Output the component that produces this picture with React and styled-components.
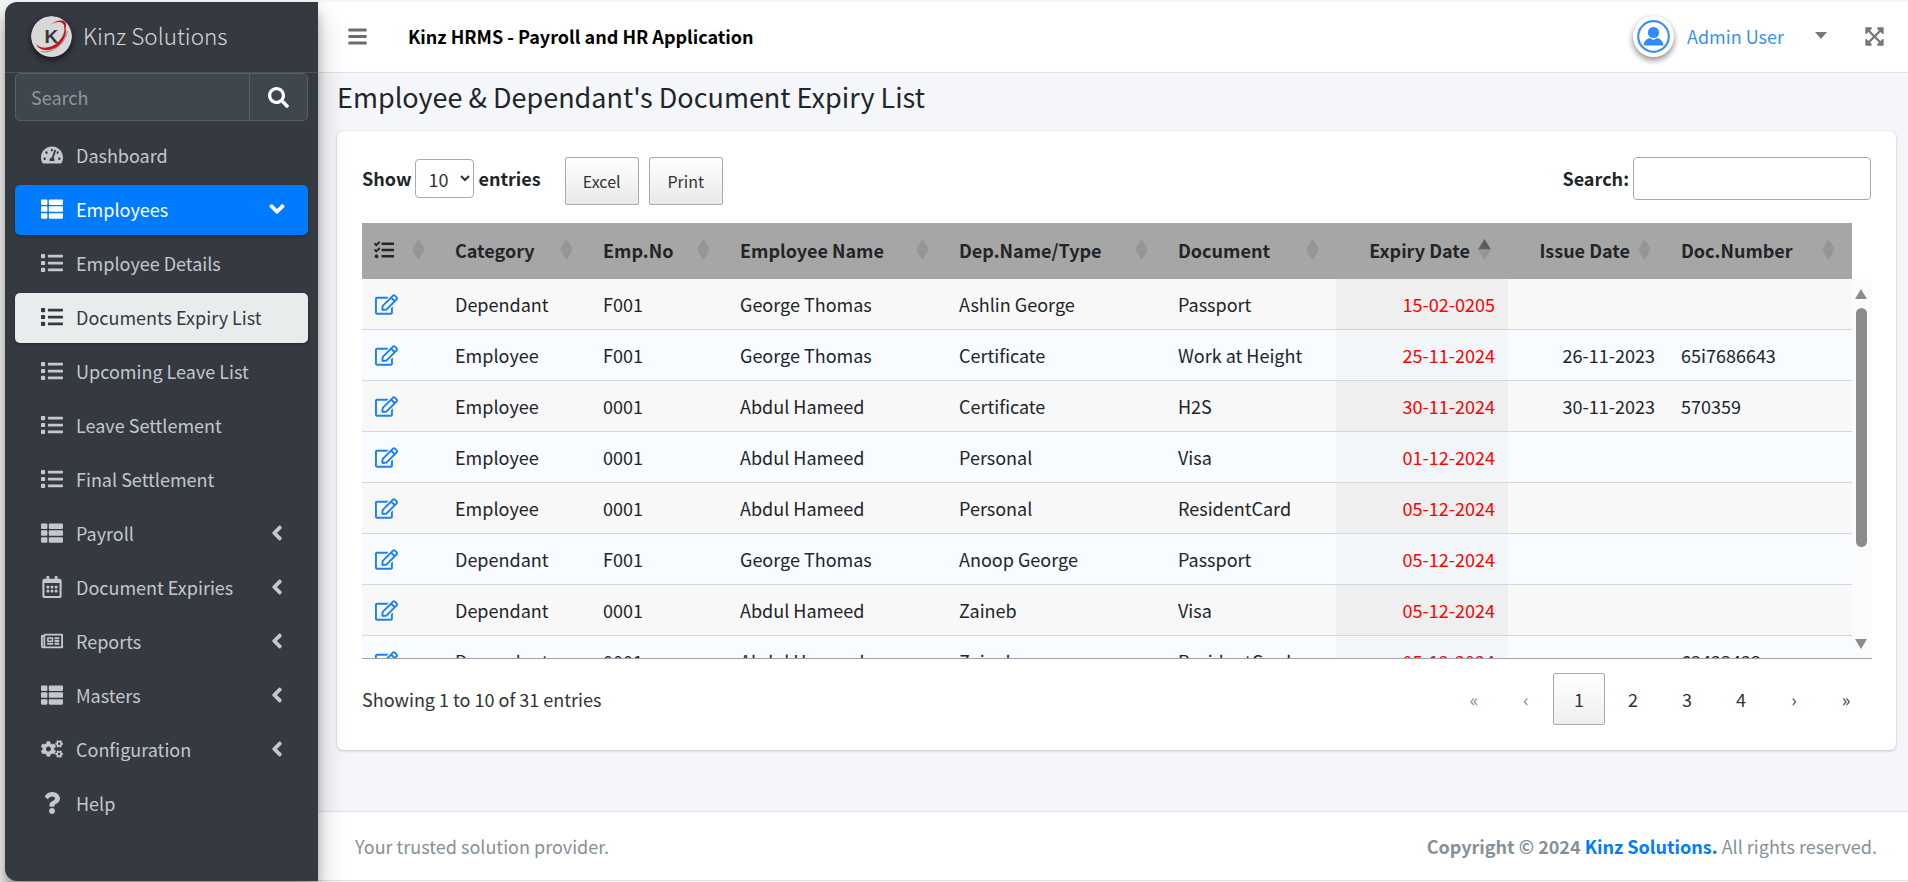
import React from "react";
import styled, { createGlobalStyle } from "styled-components";
import {
  FaTachometerAlt,
  FaThList,
  FaList,
  FaRegCalendarAlt,
  FaRegNewspaper,
  FaCogs,
  FaQuestion,
  FaAngleLeft,
  FaAngleDown,
  FaBars,
  FaExpandArrowsAlt,
  FaRegEdit,
  FaTasks,
  FaSearch,
} from "react-icons/fa";

const COLS = [80, 148, 137, 219, 219, 171, 172, 160, 184];

const HEADS = [
  { label: "" },
  { label: "Category" },
  { label: "Emp.No" },
  { label: "Employee Name" },
  { label: "Dep.Name/Type" },
  { label: "Document" },
  { label: "Expiry Date", right: true, sorted: true },
  { label: "Issue Date", right: true },
  { label: "Doc.Number" },
];

const ROWS = [
  ["Dependant", "F001", "George Thomas", "Ashlin George", "Passport", "15-02-0205", "", ""],
  ["Employee", "F001", "George Thomas", "Certificate", "Work at Height", "25-11-2024", "26-11-2023", "65i7686643"],
  ["Employee", "0001", "Abdul Hameed", "Certificate", "H2S", "30-11-2024", "30-11-2023", "570359"],
  ["Employee", "0001", "Abdul Hameed", "Personal", "Visa", "01-12-2024", "", ""],
  ["Employee", "0001", "Abdul Hameed", "Personal", "ResidentCard", "05-12-2024", "", ""],
  ["Dependant", "F001", "George Thomas", "Anoop George", "Passport", "05-12-2024", "", ""],
  ["Dependant", "0001", "Abdul Hameed", "Zaineb", "Visa", "05-12-2024", "", ""],
  ["Dependant", "0001", "Abdul Hameed", "Zaineb", "ResidentCard", "05-12-2024", "", "63423423"],
];

const MENU = [
  { label: "Dashboard", icon: FaTachometerAlt },
  { label: "Employees", icon: FaThList, state: "open" },
  { label: "Employee Details", icon: FaList },
  { label: "Documents Expiry List", icon: FaList, state: "current" },
  { label: "Upcoming Leave List", icon: FaList },
  { label: "Leave Settlement", icon: FaList },
  { label: "Final Settlement", icon: FaList },
  { label: "Payroll", icon: FaThList, more: true },
  { label: "Document Expiries", icon: FaRegCalendarAlt, more: true },
  { label: "Reports", icon: FaRegNewspaper, more: true },
  { label: "Masters", icon: FaThList, more: true },
  { label: "Configuration", icon: FaCogs, more: true },
  { label: "Help", icon: FaQuestion },
];

const PAGES = [
  { label: "«", arrow: true },
  { label: "‹", arrow: true },
  { label: "1", current: true },
  { label: "2" },
  { label: "3" },
  { label: "4" },
  { label: "›", arrow: true, live: true },
  { label: "»", arrow: true, live: true },
];

const Logo = () => (
  <LogoWrap viewBox="0 0 41 41">
    <circle cx="20.5" cy="20.5" r="20.5" fill="#d8d8d8" />
    <text x="13.5" y="27" fontSize="19" fontWeight="700" fill="#33373c" fontFamily="'Liberation Sans', sans-serif">
      K
    </text>
    <path d="M5 28 C9 33 19 33 26 27 C32 22 35 14 33 9 C37 14 35 24 26 31 C18 36 8 35 5 28 Z" fill="#c4141c" />
    <path d="M19 9 C24 5 31 3 34 6 C36 8 35 11 33.5 14 C34 9 32 6 28 6 C25 6 22 7 19 9 Z" fill="#c4141c" />
    <path d="M10 35.5 C20 38 33 30 36.500 15" fill="none" stroke="#77797c" strokeWidth="0.8" />
  </LogoWrap>
);

const UserIcon = () => (
  <svg width="33" height="33" viewBox="0 0 33 33">
    <circle cx="16.500" cy="16.500" r="15.300" fill="#fff" stroke="#3b91f5" strokeWidth="2.200" />
    <circle cx="16.500" cy="12.500" r="5.600" fill="#2f8bf7" />
    <path d="M6.500 25.500 C7 20.500 10.500 18.600 13 18 L16.500 20 L20 18 C22.500 18.600 26 20.500 26.500 25.500 Z" fill="#2f8bf7" />
  </svg>
);

const SortMark = ({ sorted }) => (
  <SortSvg viewBox="0 0 13 21">
    <path d="M6.500 0 L13 10.500 H0 Z" fill={sorted ? "#5a5d60" : "#959595"} />
    <path d="M6.500 21 L13 10.500 H0 Z" fill="#959595" />
  </SortSvg>
);

const Colgroup = () => (
  <colgroup>
    {COLS.map((w, i) => (
      <Col key={i} $w={w} />
    ))}
  </colgroup>
);

const App = () => {
  return (
    <Page>
      <GlobalStyle />
      <Sidebar>
        <Brand>
          <Logo />
          <BrandText>Kinz Solutions</BrandText>
        </Brand>
        <SideSearch>
          <SideInput placeholder="Search" />
          <SideSearchBtn>
            <FaSearch size={21} />
          </SideSearchBtn>
        </SideSearch>
        <Nav>
          {MENU.map((item) => {
            const Icon = item.icon;
            return (
              <NavItem key={item.label} $state={item.state}>
                <NavIcon>
                  <Icon />
                </NavIcon>
                <span>{item.label}</span>
                {item.more && (
                  <NavArrow>
                    <FaAngleLeft />
                  </NavArrow>
                )}
                {item.state === "open" && (
                  <NavArrow>
                    <FaAngleDown />
                  </NavArrow>
                )}
              </NavItem>
            );
          })}
        </Nav>
      </Sidebar>

      <Main>
        <TopBar>
          <Burger>
            <FaBars />
          </Burger>
          <AppTitle>Kinz HRMS - Payroll and HR Application</AppTitle>
          <UserArea>
            <Avatar>
              <UserIcon />
            </Avatar>
            <UserName>Admin User</UserName>
            <Caret />
            <Expand>
              <FaExpandArrowsAlt />
            </Expand>
          </UserArea>
        </TopBar>

        <Content>
          <Title>Employee &amp; Dependant's Document Expiry List</Title>
          <Card>
            <Controls>
              <LengthLabel>
                Show
                <LengthSelect defaultValue="10">
                  <option>10</option>
                  <option>25</option>
                  <option>50</option>
                </LengthSelect>
                entries
              </LengthLabel>
              <ExportBtn>Excel</ExportBtn>
              <ExportBtn>Print</ExportBtn>
              <SearchLabel>
                Search:
                <SearchInput />
              </SearchLabel>
            </Controls>

            <TableBox>
              <HeadWrap>
                <Table>
                  <Colgroup />
                  <thead>
                    <tr>
                      {HEADS.map((h, i) => (
                        <Th key={i} $right={h.right}>
                          {i === 0 ? <TasksIcon /> : h.label}
                          <SortMark sorted={h.sorted} />
                        </Th>
                      ))}
                    </tr>
                  </thead>
                </Table>
              </HeadWrap>
              <ScrollBody>
                <ScrollInner>
                  <Table>
                    <Colgroup />
                    <tbody>
                      {ROWS.map((row, r) => (
                        <Row key={r} $odd={r % 2 === 0}>
                          <Td>
                            <EditLink>
                              <FaRegEdit size={23} />
                            </EditLink>
                          </Td>
                          {row.map((cell, c) => (
                            <Td
                              key={c}
                              $right={c === 5 || c === 6}
                              $expiry={c === 5}
                              $odd={r % 2 === 0}
                            >
                              {cell}
                            </Td>
                          ))}
                        </Row>
                      ))}
                    </tbody>
                  </Table>
                </ScrollInner>
                <Track>
                  <ArrowUp />
                  <Thumb />
                  <ArrowDown />
                </Track>
              </ScrollBody>
            </TableBox>

            <TableFoot>
              <Info>Showing 1 to 10 of 31 entries</Info>
              <Pager>
                {PAGES.map((p) => (
                  <PageBtn key={p.label} $arrow={p.arrow} $current={p.current} $live={p.live}>
                    {p.label}
                  </PageBtn>
                ))}
              </Pager>
            </TableFoot>
          </Card>
        </Content>

        <Footer>
          <span>Your trusted solution provider.</span>
          <FootRight>
            <b>Copyright © 2024 </b>
            <FootLink>Kinz Solutions.</FootLink> All rights reserved.
          </FootRight>
        </Footer>
      </Main>
    </Page>
  );
};

export default App;

const GlobalStyle = createGlobalStyle`
  html, body {
    margin: 0;
    padding: 0;
    background: #f6f6f6;
    overflow: hidden;
  }
  * {
    box-sizing: border-box;
  }
  body {
    font-family: "Noto Sans CJK SC", "Noto Sans", sans-serif;
    font-size: 18px;
    line-height: 27px;
    color: #212529;
  }
`;

const Page = styled.div`
  display: flex;
  width: 1908px;
  height: 882px;
  padding: 2px 0 1px 5px;
`;

const Sidebar = styled.aside`
  position: relative;
  z-index: 2;
  flex: none;
  width: 313px;
  background: #343a40;
  border-radius: 12px 0 0 12px;
  box-shadow: 0 14px 28px rgba(0, 0, 0, 0.25), 0 10px 10px rgba(0, 0, 0, 0.22);
`;

const Brand = styled.div`
  display: flex;
  align-items: center;
  gap: 11px;
  height: 71px;
  padding: 0 0 1px 26px;
  border-bottom: 1px solid #4b545c;
`;

const LogoWrap = styled.svg`
  flex: none;
  width: 41px;
  height: 41px;
  border-radius: 50%;
  box-shadow: 0 3px 6px rgba(0, 0, 0, 0.4), 0 3px 6px rgba(0, 0, 0, 0.25);
`;

const BrandText = styled.span`
  margin-bottom: 2px;
  font-size: 22.500px;
  font-weight: 300;
  color: rgba(255, 255, 255, 0.8);
`;

const SideSearch = styled.div`
  display: flex;
  height: 48px;
  margin: 0 10px;
  background: #3f474e;
  border: 1px solid #56606a;
  border-radius: 5px;
`;

const SideInput = styled.input`
  flex: 1;
  min-width: 0;
  padding: 0 15px;
  background: transparent;
  border: 0;
  border-right: 1px solid #56606a;
  outline: none;
  font: inherit;
  color: #fff;
  &::placeholder {
    color: #8f969c;
  }
`;

const SideSearchBtn = styled.span`
  display: flex;
  align-items: center;
  justify-content: center;
  width: 57px;
  color: #fff;
`;

const Nav = styled.nav`
  display: flex;
  flex-direction: column;
  gap: 4px;
  margin: 10px 10px 0;
`;

const NavItem = styled.a`
  display: flex;
  align-items: center;
  height: 50px;
  padding: 0 19px 2px 26px;
  border-radius: 5px;
  color: ${(p) => (p.$state === "open" ? "#fff" : p.$state === "current" ? "#343a40" : "#c2c7d0")};
  background: ${(p) => (p.$state === "open" ? "#007bff" : p.$state === "current" ? "#e9ecec" : "transparent")};
  box-shadow: ${(p) => (p.$state ? "0 1px 3px rgba(0, 0, 0, 0.3)" : "none")};
`;

const NavIcon = styled.span`
  display: flex;
  justify-content: center;
  flex: none;
  width: 22px;
  margin-right: 13px;
  svg {
    flex: none;
    width: auto;
    height: 22px;
  }
`;

const NavArrow = styled.span`
  display: flex;
  margin-left: auto;
  svg {
    width: auto;
    height: 24px;
  }
`;

const Main = styled.div`
  display: flex;
  flex-direction: column;
  flex: 1;
  min-width: 0;
  background: #f4f6f9;
`;

const TopBar = styled.header`
  display: flex;
  align-items: center;
  flex: none;
  height: 71px;
  padding: 0 23px 1px 29px;
  background: #fff;
  border-bottom: 1px solid #dee2e6;
`;

const Burger = styled.span`
  display: flex;
  color: #6c6c6c;
  svg {
    width: auto;
    height: 21px;
  }
`;

const AppTitle = styled.div`
  margin-left: 40px;
  font-weight: 700;
  color: #000;
`;

const UserArea = styled.div`
  display: flex;
  align-items: center;
  margin-left: auto;
`;

const Avatar = styled.span`
  display: flex;
  padding: 4px;
  border-radius: 50%;
  background: #fff;
  box-shadow: 0 3px 6px rgba(0, 0, 0, 0.3), 0 3px 6px rgba(0, 0, 0, 0.2);
`;

const UserName = styled.span`
  margin-left: 13px;
  color: #3b91f5;
`;

const Caret = styled.span`
  width: 0;
  height: 0;
  margin: 0 0 3px 31px;
  border-top: 7px solid #777;
  border-left: 6px solid transparent;
  border-right: 6px solid transparent;
`;

const Expand = styled.span`
  display: flex;
  margin-left: 37px;
  color: #777;
  svg {
    width: auto;
    height: 21px;
  }
`;

const Content = styled.main`
  flex: 1;
  padding: 0 12px 0 19px;
`;

const Title = styled.h1`
  margin: 0;
  height: 58px;
  padding-top: 5px;
  font-size: 27px;
  line-height: 38px;
  font-weight: 400;
`;

const Card = styled.section`
  height: 619px;
  padding: 26px 25px 0;
  background: #fff;
  border-radius: 6px;
  box-shadow: 0 0 1px rgba(0, 0, 0, 0.125), 0 1px 3px rgba(0, 0, 0, 0.2);
`;

const Controls = styled.div`
  display: flex;
  align-items: flex-start;
  height: 66px;
`;

const LengthLabel = styled.label`
  display: flex;
  align-items: center;
  height: 39px;
  margin-top: 2px;
  font-weight: 700;
`;

const LengthSelect = styled.select`
  width: 59px;
  height: 39px;
  margin: 0 4px 0 4px;
  padding: 0 6px 0 8px;
  background: #fff;
  border: 1px solid #aaa;
  border-radius: 4px;
  font-family: inherit;
  font-size: 18px;
  color: #333;
`;

const ExportBtn = styled.button`
  width: 74px;
  height: 48px;
  margin-left: 10px;
  padding: 0;
  background: linear-gradient(to bottom, #fff 0%, #e9e9e9 100%);
  border: 1px solid #aaa;
  border-radius: 2px;
  font-family: inherit;
  font-size: 16px;
  color: #333;
  &:first-of-type {
    margin-left: 24px;
  }
`;

const SearchLabel = styled.label`
  display: flex;
  align-items: center;
  margin-left: auto;
  font-weight: 700;
`;

const SearchInput = styled.input`
  width: 238px;
  height: 43px;
  margin-left: 4px;
  background: #fff;
  border: 1px solid #aaa;
  border-radius: 4px;
  outline: none;
`;

const TableBox = styled.div`
  width: 1510px;
`;

const HeadWrap = styled.div`
  width: 1490px;
  background: #a6a6a6;
`;

const Table = styled.table`
  width: 1490px;
  table-layout: fixed;
  border-collapse: separate;
  border-spacing: 0;
`;

const Col = styled.col`
  width: ${(p) => p.$w}px;
`;

const Th = styled.th`
  position: relative;
  height: 56px;
  padding: 0 ${(p) => (p.$right ? "38px" : "13px")} 2px 13px;
  text-align: ${(p) => (p.$right ? "right" : "left")};
  font-weight: 700;
  white-space: nowrap;
`;

const TasksIcon = styled(FaTasks)`
  display: block;
  width: 20px;
  height: 20px;
  margin-left: -1px;
`;

const SortSvg = styled.svg`
  position: absolute;
  top: 16px;
  right: 17px;
  width: 13px;
  height: 21px;
`;

const ScrollBody = styled.div`
  display: flex;
  height: 380px;
  border-bottom: 1px solid #a0a4a8;
`;

const ScrollInner = styled.div`
  flex: none;
  width: 1490px;
  overflow: hidden;
`;

const Row = styled.tr`
  background: ${(p) => (p.$odd ? "#f8f8f8" : "#f8fbff")};
`;

const Td = styled.td`
  height: 51px;
  padding: 0 13px;
  border-bottom: 1px solid #d4d6d8;
  white-space: nowrap;
  text-align: ${(p) => (p.$right ? "right" : "left")};
  color: ${(p) => (p.$expiry ? "#f00" : "#212529")};
  background: ${(p) => (p.$expiry ? (p.$odd ? "#efefef" : "#f3f6f9") : "transparent")};
`;

const EditLink = styled.a`
  display: flex;
  color: #1a80f5;
`;

const Track = styled.div`
  position: relative;
  flex: 1;
  background: #fbfbfb;
`;

const Thumb = styled.div`
  position: absolute;
  top: 29px;
  left: 4px;
  width: 11px;
  height: 239px;
  background: #8c8c8c;
  border-radius: 6px;
`;

const ArrowUp = styled.div`
  position: absolute;
  top: 10px;
  left: 3px;
  width: 0;
  height: 0;
  border-bottom: 10px solid #8c8c8c;
  border-left: 6.500px solid transparent;
  border-right: 6.500px solid transparent;
`;

const ArrowDown = styled(ArrowUp)`
  top: 360px;
  border-bottom: 0;
  border-top: 10px solid #8c8c8c;
`;

const TableFoot = styled.div`
  display: flex;
  align-items: center;
  justify-content: space-between;
  width: 1509px;
  margin-top: 14px;
`;

const Info = styled.div`
  color: #333;
`;

const Pager = styled.div`
  display: flex;
  gap: 2px;
`;

const PageBtn = styled.a`
  display: flex;
  align-items: center;
  justify-content: center;
  width: ${(p) => (p.$arrow ? "50px" : "52px")};
  height: 52px;
  color: ${(p) => (p.$arrow ? (p.$live ? "#444" : "#888") : "#333")};
  border: 1px solid ${(p) => (p.$current ? "#aaa" : "transparent")};
  border-radius: 2px;
  background: ${(p) => (p.$current ? "linear-gradient(to bottom, #fff 0%, #efefef 100%)" : "transparent")};
`;

const Footer = styled.footer`
  display: flex;
  align-items: center;
  justify-content: space-between;
  flex: none;
  height: 70px;
  padding: 0 31px 0 37px;
  background: #fff;
  border-top: 1px solid #dee2e6;
  border-bottom: 1px solid #dee2e6;
  color: #869099;
`;

const FootRight = styled.div`
  b {
    font-weight: 700;
  }
`;

const FootLink = styled.a`
  font-weight: 700;
  color: #007bff;
`;
